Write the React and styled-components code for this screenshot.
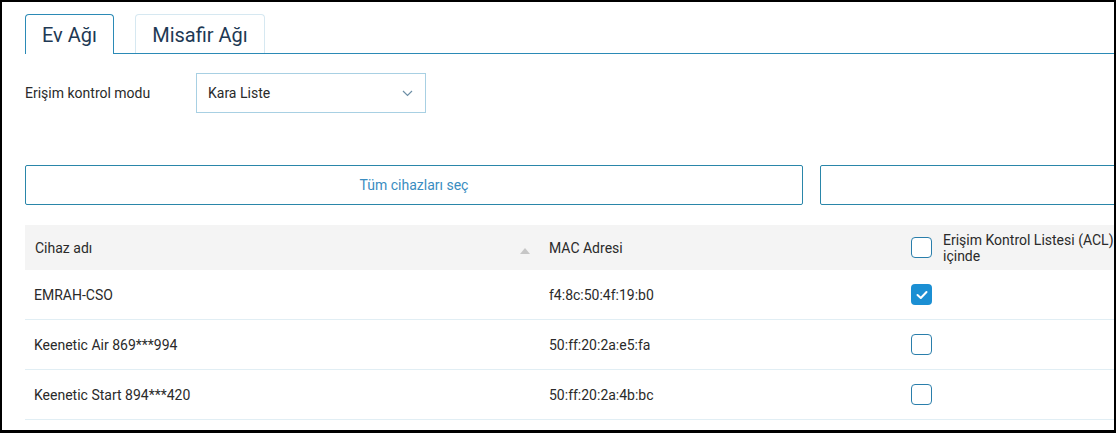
import React from "react";
import styled, { createGlobalStyle } from "styled-components";

const Global = createGlobalStyle`
  html, body { margin: 0; padding: 0; background: #fff; }
  body { font-family: Roboto, "Noto Sans", Arial, sans-serif; }
`;

const Frame = styled.div`
  width: 1116px;
  height: 433px;
  box-sizing: border-box;
  border-style: solid;
  border-color: #000;
  border-width: 2px 2px 3px 2px;
  overflow: hidden;
  background: #fff;
`;

const Page = styled.div`
  width: 1600px;
  padding: 11px 0 0 23px;
  box-sizing: border-box;
`;

const TabBar = styled.div`
  display: flex;
  align-items: flex-end;
  gap: 21px;
  border-bottom: 1px solid #2b8ab6;
  height: 40px;
`;

const Tab = styled.div`
  box-sizing: border-box;
  height: ${(p) => (p.$active ? "40px" : "39px")};
  width: ${(p) => p.$w}px;
  margin-bottom: ${(p) => (p.$active ? "-1px" : "0")};
  background: #fff;
  border: 1px solid ${(p) => (p.$active ? "#2b8ab6" : "#d6e8f1")};
  border-bottom: ${(p) => (p.$active ? "none" : "0")};
  border-radius: 4px 4px 0 0;
  display: flex;
  align-items: center;
  justify-content: center;
  font-size: 20px;
  color: #1e3954;
  padding-top: 1px;
`;

const FormRow = styled.div`
  display: flex;
  align-items: center;
  margin-top: 19px;
  height: 40px;
`;

const Label = styled.div`
  width: 171px;
  font-size: 14px;
  color: #2a2a2a;
`;

const Select = styled.div`
  box-sizing: border-box;
  width: 230px;
  height: 40px;
  border: 1px solid #a8d0e3;
  display: flex;
  align-items: center;
  justify-content: space-between;
  padding: 0 12px 0 11px;
  font-size: 14px;
  color: #2a2a2a;
`;

const Buttons = styled.div`
  display: flex;
  gap: 17px;
  margin-top: 52px;
`;

const Button = styled.div`
  box-sizing: border-box;
  width: 778px;
  height: 40px;
  border: 1px solid #2a86a9;
  border-radius: 2px;
  display: flex;
  align-items: center;
  justify-content: center;
  font-size: 14px;
  color: #3a8dc1;
`;

const Table = styled.div`
  margin-top: 20px;
  width: 1200px;
`;

const Row = styled.div`
  display: grid;
  grid-template-columns: 515px 359px 1fr;
  align-items: center;
  box-sizing: border-box;
  height: ${(p) => (p.$head ? "45px" : "50px")};
  background: ${(p) => (p.$head ? "#f4f4f4" : "#fff")};
  border-bottom: ${(p) => (p.$head ? "none" : "1px solid #e1eef4")};
  font-size: 14px;
  color: #2a2a2a;
`;

const Cell = styled.div`
  display: flex;
  align-items: center;
  padding-left: ${(p) => p.$pl || 0}px;
  padding-right: ${(p) => p.$pr || 0}px;
  justify-content: ${(p) => (p.$between ? "space-between" : "flex-start")};
  gap: 11px;
`;

const Box = styled.div`
  box-sizing: border-box;
  width: 21px;
  height: 21px;
  border-radius: 4px;
  border: ${(p) => (p.$checked ? "none" : "1.5px solid #2a7eab")};
  background: ${(p) => (p.$checked ? "#1b8fd3" : "#fff")};
  display: flex;
  align-items: center;
  justify-content: center;
  flex-shrink: 0;
`;

const HeadText = styled.div`
  line-height: 16px;
  width: 176px;
`;

const SortArrow = styled.span`
  width: 0;
  height: 0;
  border-left: 5px solid transparent;
  border-right: 5px solid transparent;
  border-bottom: 6px solid #c6c6c6;
  margin-top: 6px;
`;

const Check = ({ checked }) => (
  <Box $checked={checked}>
    {checked && (
      <svg width="12" height="10" viewBox="0 0 12 10">
        <path d="M1.5 5 L4.8 8 L10.5 2" fill="none" stroke="#fff" strokeWidth="2" strokeLinecap="round" strokeLinejoin="round" />
      </svg>
    )}
  </Box>
);

const rows = [
  { name: "EMRAH-CSO", mac: "f4:8c:50:4f:19:b0", checked: true },
  { name: "Keenetic Air 869***994", mac: "50:ff:20:2a:e5:fa", checked: false },
  { name: "Keenetic Start 894***420", mac: "50:ff:20:2a:4b:bc", checked: false },
];

export default function App() {
  return (
    <>
      <Global />
      <Frame>
        <Page>
          <TabBar>
            <Tab $active $w={89}>Ev Ağı</Tab>
            <Tab $w={130}>Misafir Ağı</Tab>
          </TabBar>
          <FormRow>
            <Label>Erişim kontrol modu</Label>
            <Select>
              <span>Kara Liste</span>
              <svg width="11" height="7" viewBox="0 0 11 7">
                <path d="M1 1 L5.5 5.5 L10 1" fill="none" stroke="#6d8fa6" strokeWidth="1.2" />
              </svg>
            </Select>
          </FormRow>
          <Buttons>
            <Button>Tüm cihazları seç</Button>
            <Button aria-label="Tüm cihazların seçimini kaldır" />
          </Buttons>
          <Table>
            <Row $head>
              <Cell $pl={10} $pr={10} $between>
                <span>Cihaz adı</span>
                <SortArrow />
              </Cell>
              <Cell $pl={9}>MAC Adresi</Cell>
              <Cell $pl={12}>
                <Check />
                <HeadText>Erişim Kontrol Listesi (ACL) içinde</HeadText>
              </Cell>
            </Row>
            {rows.map((r) => (
              <Row key={r.mac}>
                <Cell $pl={9}>{r.name}</Cell>
                <Cell $pl={9}>{r.mac}</Cell>
                <Cell $pl={12}>
                  <Check checked={r.checked} />
                </Cell>
              </Row>
            ))}
          </Table>
        </Page>
      </Frame>
    </>
  );
}
